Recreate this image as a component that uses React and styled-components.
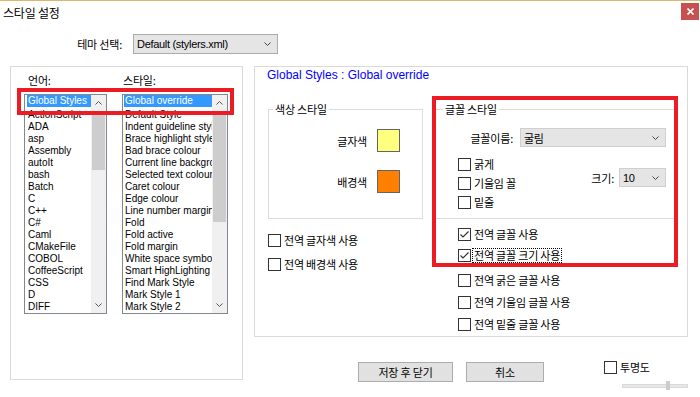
import React from 'react';
import styled, { createGlobalStyle, css } from 'styled-components';

const KR = `"Noto Sans CJK KR", "Liberation Sans", sans-serif`;
const EN = `"Liberation Sans", Arial, sans-serif`;

const GlobalStyle = createGlobalStyle`
  html, body {
    margin: 0;
    padding: 0;
    background: #fff;
  }
  body {
    width: 700px;
    height: 397px;
    overflow: hidden;
    font-family: ${KR};
    font-size: 11px;
    color: #000;
  }
  * {
    box-sizing: border-box;
  }
`;

const Dialog = styled.div`
  position: relative;
  width: 700px;
  height: 397px;
  border-top: 1px solid #dcb66c;
  background: #fff;
  display: flex;
  flex-direction: column;
`;

const TitleBar = styled.div`
  height: 23px;
  display: flex;
  justify-content: space-between;
`;

const Title = styled.div`
  padding-left: 3px;
  font: 12px ${KR};
  line-height: 23px;
  letter-spacing: -0.2px;
`;

const CloseBtn = styled.div`
  width: 18px;
  height: 17px;
  margin: 2px 1px 0 0;
  background: #c75050;
  display: flex;
  align-items: center;
  justify-content: center;
`;

const ThemeRow = styled.div`
  margin-top: 10px;
  height: 20px;
  display: flex;
  align-items: center;
  gap: 11px;
`;

const Label = styled.div`
  font: 11px ${KR};
  letter-spacing: -0.2px;
  line-height: 14px;
  white-space: nowrap;
  ${(p) => p.$w && css`
    width: ${p.$w}px;
    text-align: right;
  `}
`;

const Select = styled.div`
  width: ${(p) => p.$w}px;
  height: ${(p) => p.$h}px;
  background: #e5e5e5;
  border: 1px solid ${(p) => (p.$light ? '#cfcfcf' : '#acacac')};
  display: flex;
  align-items: center;
  justify-content: space-between;
  padding: 0 6px 0 3px;
  font: ${(p) => (p.$kr ? `11px ${KR}` : `11px ${EN}`)};
  letter-spacing: -0.3px;
  white-space: nowrap;
`;

const Main = styled.div`
  margin-top: 12px;
  padding-left: 10px;
  display: flex;
  gap: 11px;
`;

const LeftPanel = styled.div`
  position: relative;
  width: 233px;
  height: 314px;
  border: 1px solid #dadada;
  padding: 6px 0 0 13px;
  display: flex;
  gap: 15px;
`;

const ListColumn = styled.div`
  display: flex;
  flex-direction: column;
`;

const ListLabel = styled(Label)`
  margin-bottom: 7px;
  padding-left: ${(p) => p.$pl}px;
`;

const ListBox = styled.div`
  width: ${(p) => p.$w}px;
  height: 220px;
  border: 1px solid #828790;
  display: flex;
`;

const Items = styled.div`
  flex: 1;
  min-width: 0;
  overflow: hidden;
  padding-left: ${(p) => p.$pl}px;
`;

const Item = styled.div`
  height: 12px;
  font: 10px ${EN};
  line-height: 12px;
  white-space: nowrap;
  overflow: hidden;
  padding-left: 1px;
  ${(p) => p.$sel && css`
    background: #3399ff;
    color: #fff;
    margin-bottom: 2px;
  `}
`;

const ScrollBar = styled.div`
  width: 15px;
  display: flex;
  flex-direction: column;
  background: #f0f0f0;
`;

const ScrollBtn = styled.div`
  height: 16px;
  display: flex;
  align-items: center;
  justify-content: center;
`;

const Track = styled.div`
  flex: 1;
  padding: 1px 1px 0;
`;

const Thumb = styled.div`
  height: ${(p) => p.$h}px;
  background: #cdcdcd;
`;

const RedBox = styled.div`
  position: absolute;
  left: ${(p) => p.$x}px;
  top: ${(p) => p.$y}px;
  width: ${(p) => p.$w}px;
  height: ${(p) => p.$h}px;
  border: 4px solid #ec1c24;
  pointer-events: none;
`;

const RightColumn = styled.div`
  width: 434px;
  display: flex;
  flex-direction: column;
`;

const RightPanel = styled.div`
  position: relative;
  height: 271px;
  border: 1px solid #dadada;
  padding: 1px 12px 0;
`;

const PanelTitle = styled.div`
  font: 12px ${EN};
  line-height: 14px;
  color: #0000ff;
`;

const ContentRow = styled.div`
  display: flex;
  gap: 12px;
  padding-top: 20px;
`;

const ColorCol = styled.div`
  width: 155px;
  margin-left: 1px;
  display: flex;
  flex-direction: column;
`;

const FontCol = styled.div`
  width: 240px;
  display: flex;
  flex-direction: column;
`;

const Group = styled.fieldset`
  margin: 0;
  padding: 0;
  min-width: 0;
  border: 1px solid #dcdcdc;
  height: ${(p) => p.$h}px;
`;

const Legend = styled.legend`
  padding: 0 2px;
  margin-left: ${(p) => p.$ml}px;
  font: 11px ${KR};
  line-height: 14px;
  letter-spacing: -0.2px;
`;

const SwatchGrid = styled.div`
  display: grid;
  grid-template-columns: auto auto;
  justify-content: end;
  align-items: center;
  column-gap: 10px;
  row-gap: 18px;
  padding: 13px 22px 0 0;
`;

const Swatch = styled.div`
  width: 23px;
  height: 23px;
  border: 1px solid #646464;
  background: ${(p) => p.$c};
`;

const CheckRow = styled.div`
  display: flex;
  align-items: center;
  gap: 2px;
  height: 13px;
  margin-top: ${(p) => p.$mt || 0}px;
  margin-left: ${(p) => p.$ml || 0}px;
  font: 11px ${KR};
  letter-spacing: -0.2px;
  white-space: nowrap;
`;

const Box = styled.div`
  width: 13px;
  height: 13px;
  border: 1px solid #333;
  background: #fff;
  display: flex;
  align-items: center;
  justify-content: center;
  flex-shrink: 0;
`;

const CheckText = styled.span`
  line-height: 13px;
  padding: 0 1px;
  ${(p) => p.$focus && css`
    outline: 1px dotted #000;
    outline-offset: 0;
  `}
`;

const GroupBody = styled.div`
  padding-top: 12px;
`;

const NameRow = styled.div`
  display: flex;
  justify-content: flex-end;
  align-items: center;
  gap: 7px;
  padding-right: 8px;
`;

const StyleRow = styled.div`
  display: flex;
  justify-content: space-between;
  margin-top: 11px;
  padding: 0 8px 0 22px;
`;

const CheckStack = styled.div`
  display: flex;
  flex-direction: column;
  gap: 6px;
`;

const SizeGroup = styled.div`
  margin-top: 10px;
  display: flex;
  align-items: center;
  gap: 5px;
  align-self: flex-start;
`;

const BottomRow = styled.div`
  margin-top: 24px;
  padding-left: 104px;
  display: flex;
  align-items: flex-start;
`;

const Button = styled.div`
  width: ${(p) => p.$w}px;
  height: 20px;
  margin-top: 1px;
  margin-left: ${(p) => p.$ml || 0}px;
  background: #e1e1e1;
  border: 1px solid #adadad;
  display: flex;
  align-items: center;
  justify-content: center;
  font: 11px ${KR};
  letter-spacing: -0.2px;
`;

const Opacity = styled.div`
  margin-left: 60px;
  display: flex;
  flex-direction: column;
`;

const Slider = styled.div`
  position: relative;
  width: 66px;
  height: 9px;
  margin: 7px 0 0 18px;
  display: flex;
  align-items: center;
`;

const SliderTrack = styled.div`
  width: 100%;
  height: 4px;
  background: #e7e7e7;
  border: 1px solid #dadada;
`;

const SliderThumb = styled.div`
  position: absolute;
  left: 44px;
  top: 0;
  width: 4px;
  height: 9px;
  background: #cdcdcd;
`;

const Chevron = ({ up, color = '#555' }) => (
  <svg width="7" height="4" viewBox="0 0 7 4">
    <polyline
      points={up ? '0.5,3.5 3.5,0.5 6.5,3.5' : '0.5,0.5 3.5,3.5 6.5,0.5'}
      fill="none"
      stroke={color}
      strokeWidth="1"
    />
  </svg>
);

const CheckBox = ({ checked, focus, children, mt, ml }) => (
  <CheckRow $mt={mt} $ml={ml}>
    <Box>
      {checked && (
        <svg width="11" height="11" viewBox="0 0 11 11">
          <polyline points="1.5,5.5 4,8 9.5,2.5" fill="none" stroke="#333" strokeWidth="1.2" />
        </svg>
      )}
    </Box>
    <CheckText $focus={focus}>{children}</CheckText>
  </CheckRow>
);

const List = ({ width, pl, items, thumb }) => (
  <ListBox $w={width}>
    <Items $pl={pl}>
      {items.map((name, i) => (
        <Item key={name} $sel={i === 0}>
          {name}
        </Item>
      ))}
    </Items>
    <ScrollBar>
      <ScrollBtn>
        <Chevron up />
      </ScrollBtn>
      <Track>
        <Thumb $h={thumb} />
      </Track>
      <ScrollBtn>
        <Chevron />
      </ScrollBtn>
    </ScrollBar>
  </ListBox>
);

const languages = [
  'Global Styles', 'ActionScript', 'ADA', 'asp', 'Assembly', 'autoIt', 'bash', 'Batch',
  'C', 'C++', 'C#', 'Caml', 'CMakeFile', 'COBOL', 'CoffeeScript', 'CSS', 'D', 'DIFF',
];

const styles = [
  'Global override', 'Default Style', 'Indent guideline style', 'Brace highlight style',
  'Bad brace colour', 'Current line background colour', 'Selected text colour', 'Caret colour',
  'Edge colour', 'Line number margin', 'Fold', 'Fold active', 'Fold margin',
  'White space symbol', 'Smart HighLighting', 'Find Mark Style', 'Mark Style 1', 'Mark Style 2',
];

export default function App() {
  return (
    <>
      <GlobalStyle />
      <Dialog>
        <TitleBar>
          <Title>스타일 설정</Title>
          <CloseBtn>
            <svg width="7" height="7" viewBox="0 0 7 7">
              <path d="M0.5 0.5 L6.5 6.5 M6.5 0.5 L0.5 6.5" stroke="#fff" strokeWidth="1.6" />
            </svg>
          </CloseBtn>
        </TitleBar>

        <ThemeRow>
          <Label $w={122}>테마 선택:</Label>
          <Select $w={145} $h={20}>
            Default (stylers.xml)
            <Chevron color="#444" />
          </Select>
        </ThemeRow>

        <Main>
          <LeftPanel>
            <ListColumn>
              <ListLabel $pl={4}>언어:</ListLabel>
              <List width={83} pl={2} items={languages} thumb={58} />
            </ListColumn>
            <ListColumn>
              <ListLabel $pl={1}>스타일:</ListLabel>
              <List width={106} pl={1} items={styles} thumb={110} />
            </ListColumn>
            <RedBox $x={6} $y={21} $w={217} $h={27} />
          </LeftPanel>

          <RightColumn>
            <RightPanel>
              <PanelTitle>Global Styles : Global override</PanelTitle>
              <ContentRow>
                <ColorCol>
                  <Group $h={117}>
                    <Legend $ml={4}>색상 스타일</Legend>
                    <SwatchGrid>
                      <Label>글자색</Label>
                      <Swatch $c="#ffff80" />
                      <Label>배경색</Label>
                      <Swatch $c="#ff8000" />
                    </SwatchGrid>
                  </Group>
                  <CheckBox mt={15}>전역 글자색 사용</CheckBox>
                  <CheckBox mt={11}>전역 배경색 사용</CheckBox>
                </ColorCol>

                <FontCol>
                  <Group $h={117}>
                    <Legend $ml={7}>글꼴 스타일</Legend>
                    <GroupBody>
                      <NameRow>
                        <Label>글꼴이름:</Label>
                        <Select $w={146} $h={19} $kr $light>
                          굴림
                          <Chevron color="#444" />
                        </Select>
                      </NameRow>
                      <StyleRow>
                        <CheckStack>
                          <CheckBox>굵게</CheckBox>
                          <CheckBox>기울임 꼴</CheckBox>
                          <CheckBox>밑줄</CheckBox>
                        </CheckStack>
                        <SizeGroup>
                          <Label>크기:</Label>
                          <Select $w={47} $h={19} $light>
                            10
                            <Chevron color="#444" />
                          </Select>
                        </SizeGroup>
                      </StyleRow>
                    </GroupBody>
                  </Group>
                  <CheckBox checked mt={9} ml={23}>전역 글꼴 사용</CheckBox>
                  <CheckBox checked focus mt={8} ml={23}>전역 글꼴 크기 사용</CheckBox>
                  <CheckBox mt={12} ml={23}>전역 굵은 글꼴 사용</CheckBox>
                  <CheckBox mt={9} ml={23}>전역 기울임 글꼴 사용</CheckBox>
                  <CheckBox mt={9} ml={23}>전역 밑줄 글꼴 사용</CheckBox>
                </FontCol>
              </ContentRow>
              <RedBox $x={177} $y={29} $w={246} $h={171} />
            </RightPanel>

            <BottomRow>
              <Button $w={95}>저장 후 닫기</Button>
              <Button $w={78} $ml={13}>취소</Button>
              <Opacity>
                <CheckBox>투명도</CheckBox>
                <Slider>
                  <SliderTrack />
                  <SliderThumb />
                </Slider>
              </Opacity>
            </BottomRow>
          </RightColumn>
        </Main>
      </Dialog>
    </>
  );
}
